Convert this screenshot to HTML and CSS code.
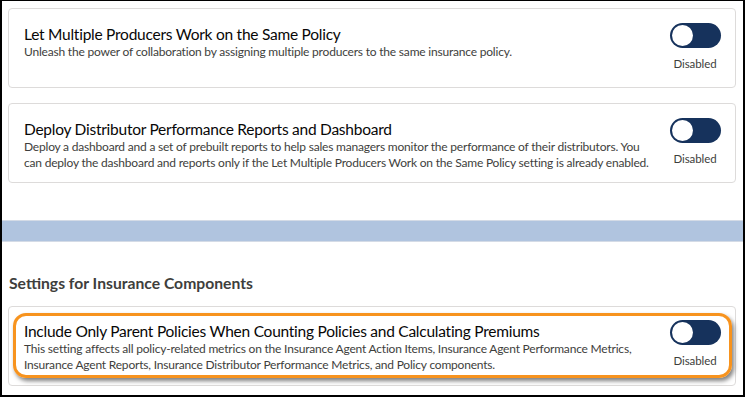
FILE: index.html
```html
<!DOCTYPE html>
<html lang="en">
<head>
  <meta charset="UTF-8">
  <title>Insurance Settings</title>
  <link rel="stylesheet" href="styles.css">
</head>
<body>

  <div class="frame">
    <div class="card-list">
      <div class="setting-card">
        <div class="setting-text">
          <h2>Let Multiple Producers Work on the Same Policy</h2>
          <p>Unleash the power of collaboration by assigning multiple producers to the same insurance policy.</p>
        </div>
        <div class="toggle-box">
          <span class="toggle"><span class="knob"></span></span>
          <span class="toggle-label">Disabled</span>
        </div>
      </div>

      <div class="setting-card">
        <div class="setting-text">
          <h2>Deploy Distributor Performance Reports and Dashboard</h2>
          <p>Deploy a dashboard and a set of prebuilt reports to help sales managers monitor the performance of their distributors. You can deploy the dashboard and reports only if the Let Multiple Producers Work on the Same Policy setting is already enabled.</p>
        </div>
        <div class="toggle-box">
          <span class="toggle"><span class="knob"></span></span>
          <span class="toggle-label">Disabled</span>
        </div>
      </div>
    </div>

    <div class="band"></div>

    <h3 class="section-title">Settings for Insurance Components</h3>

    <div class="card-list">
      <div class="setting-card highlighted">
        <div class="setting-text">
          <h2>Include Only Parent Policies When Counting Policies and Calculating Premiums</h2>
          <p>This setting affects all policy-related metrics on the Insurance Agent Action Items, Insurance Agent Performance Metrics, Insurance Agent Reports, Insurance Distributor Performance Metrics, and Policy components.</p>
        </div>
        <div class="toggle-box">
          <span class="toggle"><span class="knob"></span></span>
          <span class="toggle-label">Disabled</span>
        </div>
        <div class="callout"></div>
      </div>
    </div>
  </div>

</body>
</html>
```

FILE: styles.css
```css
* {
  margin: 0;
  padding: 0;
  box-sizing: border-box;
}

body {
  font-family: Lato, 'Noto Sans', sans-serif;
  background-color: #fff;
  color: #080707;
}

.frame {
  width: 745px;
  height: 397px;
  border: solid #000;
  border-width: 1px 2px 2px 2px;
  background-color: #fff;
  overflow: hidden;
}

.card-list {
  display: flex;
  flex-direction: column;
  gap: 15px;
  padding: 7px 7px 0 6px;
}

.setting-card {
  position: relative;
  height: 80px;
  display: flex;
  justify-content: space-between;
  align-items: flex-start;
  gap: 20px;
  padding: 14px 14px 0 15px;
  border: 1px solid #dddbda;
  border-radius: 4px;
}

.setting-text {
  padding-top: 1px;
}

.setting-text h2 {
  font-size: 15.5px;
  font-weight: 400;
  letter-spacing: -0.25px;
  line-height: 20px;
  color: #080707;
}

.setting-text p {
  font-size: 12px;
  letter-spacing: -0.2px;
  line-height: 16px;
  color: #3e3e3c;
}

.toggle-box {
  flex-shrink: 0;
  width: 52px;
  display: flex;
  flex-direction: column;
  align-items: center;
}

.toggle {
  display: block;
  width: 51px;
  height: 25px;
  border-radius: 13px;
  background-color: #16325c;
  padding: 2px 0 0 2px;
}

.knob {
  display: block;
  width: 21px;
  height: 21px;
  border-radius: 50%;
  background-color: #fff;
}

.toggle-label {
  margin-top: 8px;
  font-size: 11.5px;
  letter-spacing: -0.1px;
  line-height: 16px;
  color: #3e3e3c;
}

.band {
  height: 22px;
  margin: 37px 0 0 -2px;
  background-color: #b0c4df;
  border-top: 1px solid #d4dbe6;
  border-bottom: 1px solid #d4dbe6;
}

.section-title {
  margin: 31px 0 0 7px;
  font-size: 15.7px;
  font-weight: 700;
  line-height: 20px;
  color: #3e3e3c;
}

.highlighted {
  margin-top: -8px;
  padding-top: 13px;
}

.card-list:last-child {
  padding-top: 21px;
}

.callout {
  position: absolute;
  left: 4px;
  top: 6px;
  right: 3px;
  bottom: 7px;
  border: 3px solid #f7931e;
  border-radius: 13px;
  box-shadow: 2px 3px 4px rgba(0, 0, 0, 0.5);
  pointer-events: none;
}
```
